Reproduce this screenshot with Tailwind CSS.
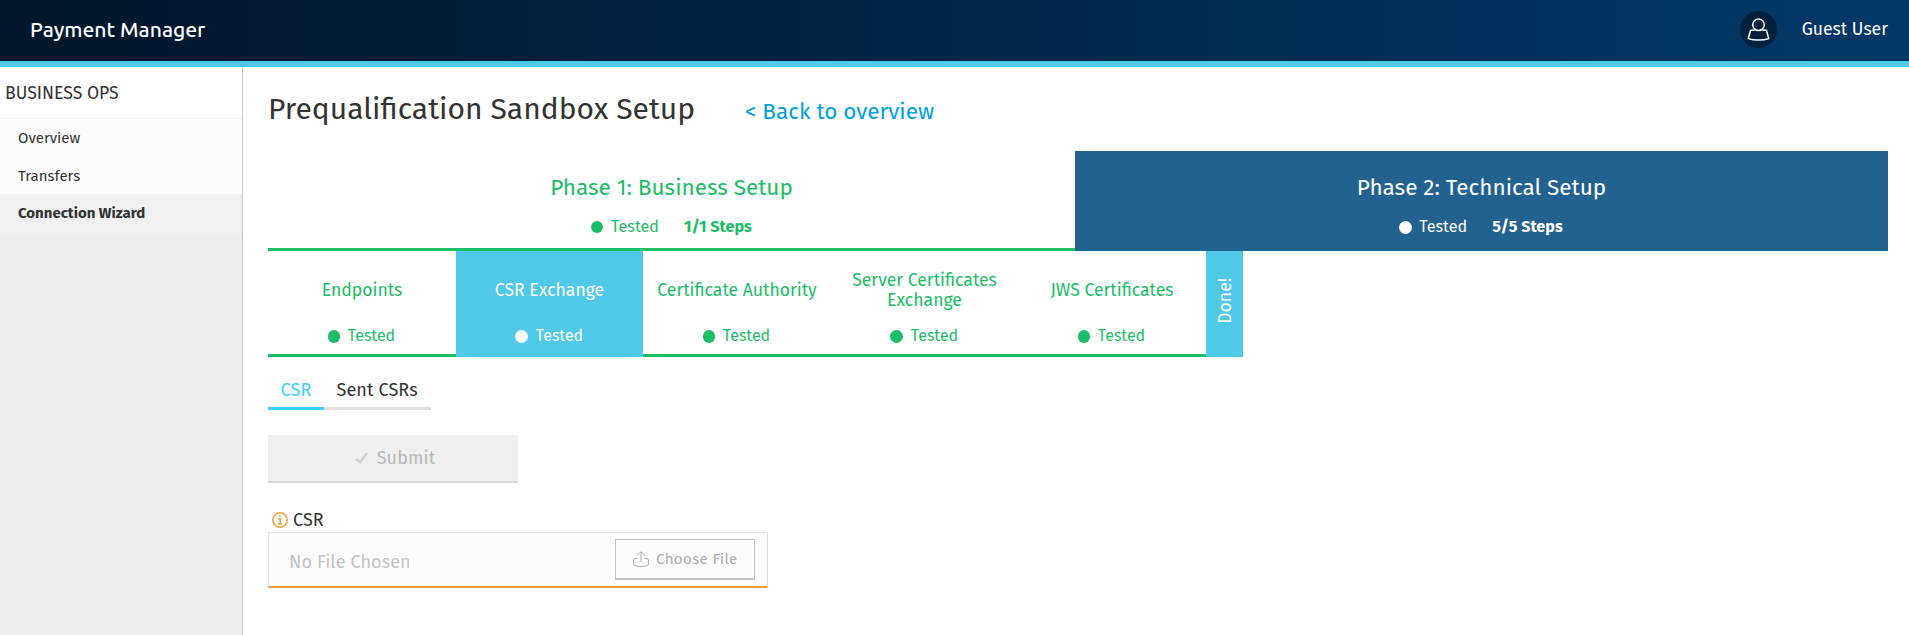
<!DOCTYPE html>
<html lang="en">
<head>
<meta charset="utf-8">
<title>Payment Manager</title>
<script src="https://cdn.jsdelivr.net/npm/@tailwindcss/browser@4"></script>
</head>
<body class="flex h-screen flex-col overflow-hidden bg-white font-['Fira_Sans','Noto_Sans',sans-serif] text-[#333]">
  <header class="flex h-[67px] shrink-0 items-center justify-between border-b-6 border-[#50c8e8] bg-linear-to-r from-[#00162b] to-[#033868] pr-[21px] pb-[3px] pl-[30px] text-white">
    <div class="font-['Ubuntu','Noto_Sans',sans-serif] text-[21.1px] leading-7 font-medium">Payment Manager</div>
    <div class="flex items-center">
      <div class="mt-px flex size-[37px] items-center justify-center rounded-full bg-[#03213c]">
        <svg class="size-[23px]" viewBox="0 0 23 23" fill="none" stroke="#fff" stroke-width="1.5" stroke-linejoin="round"><circle cx="11.5" cy="6.8" r="5.8"/><path d="M7.5 12.2H3.6L1.2 20.6C7 22.6 16 22.6 21.8 20.6L19.4 12.2H15.5"/></svg>
      </div>
      <div class="mt-0.5 ml-[25px] text-[17.6px] leading-6">Guest User</div>
    </div>
  </header>
  <div class="flex min-h-0 flex-1">
    <nav class="w-[243px] shrink-0 border-r border-[#c8c8c8] bg-[#ededed]">
      <div class="flex h-[52px] items-center border-b border-[#eee] bg-white pt-[3px] pl-[5px] text-[17.6px]">BUSINESS OPS</div>
      <div class="flex h-[38px] items-center bg-[#fcfcfc] pl-[18px] text-[15px]">Overview</div>
      <div class="flex h-[37px] items-center bg-[#fcfcfc] pt-0.5 pl-[18px] text-[15px]">Transfers</div>
      <div class="flex h-[39px] items-center bg-[#f0f0f0] pl-[18px] text-[15px] font-bold">Connection Wizard</div>
    </nav>
    <main class="flex-1 pt-[22px] pr-[21px] pl-[25px]">
      <div class="flex h-[62px] items-start">
        <h1 class="text-[30px] leading-10">Prequalification Sandbox Setup</h1>
        <a class="mt-[5px] ml-[50px] text-[22.5px] leading-9 text-[#009fe0]">&lt; Back to overview</a>
      </div>
      <div class="flex h-[100px] text-center">
        <div class="w-[807px] border-b-3 border-[#1bbd66] pt-[22px] text-[#1bbd66]">
          <div class="text-[22.5px] leading-[30px]">Phase 1: Business Setup</div>
          <div class="mt-[14px] flex items-center justify-center text-[16.2px] leading-5"><i class="mr-2 size-3 rounded-full bg-[#1bbd66]"></i>Tested<b class="ml-[25px]">1/1 Steps</b></div>
        </div>
        <div class="w-[813px] bg-[#226291] pt-[22px] text-white">
          <div class="text-[22.5px] leading-[30px]">Phase 2: Technical Setup</div>
          <div class="mt-[14px] flex items-center justify-center pr-px text-[16.2px] leading-5"><i class="mr-[7px] size-[13px] rounded-full bg-white"></i>Tested<b class="ml-[25px]">5/5 Steps</b></div>
        </div>
      </div>
      <div class="flex h-[106px] text-center text-[17.6px] leading-5 text-[#1bbd66]">
        <div class="w-[188px] border-b-3 border-[#1bbd66] pt-5">
          <div class="flex h-10 items-center justify-center">Endpoints</div>
          <div class="mt-[15px] flex items-center justify-center pr-px text-base leading-5"><i class="mr-2 h-[13px] w-3 rounded-full bg-[#1bbd66]"></i>Tested</div>
        </div>
        <div class="w-[187px] bg-[#50c8e8] pt-5 text-white">
          <div class="flex h-10 items-center justify-center">CSR Exchange</div>
          <div class="mt-[15px] flex items-center justify-center pr-px text-base leading-5"><i class="mr-2 size-[13px] rounded-full bg-white"></i>Tested</div>
        </div>
        <div class="w-[188px] border-b-3 border-[#1bbd66] pt-5">
          <div class="flex h-10 items-center justify-center">Certificate Authority</div>
          <div class="mt-[15px] flex items-center justify-center pr-px text-base leading-5"><i class="mr-2 h-[13px] w-3 rounded-full bg-[#1bbd66]"></i>Tested</div>
        </div>
        <div class="w-[187px] border-b-3 border-[#1bbd66] pt-5">
          <div class="flex h-10 items-center justify-center">Server Certificates<br>Exchange</div>
          <div class="mt-[15px] flex items-center justify-center pr-px text-base leading-5"><i class="mr-2 size-[13px] rounded-full bg-[#1bbd66]"></i>Tested</div>
        </div>
        <div class="w-[188px] border-b-3 border-[#1bbd66] pt-5">
          <div class="flex h-10 items-center justify-center">JWS Certificates</div>
          <div class="mt-[15px] flex items-center justify-center pr-px text-base leading-5"><i class="mr-2 h-[13px] w-3 rounded-full bg-[#1bbd66]"></i>Tested</div>
        </div>
        <div class="flex w-[37px] items-center justify-center bg-[#50c8e8] text-white">
          <span class="mt-[-7px] ml-0.5 rotate-180 [writing-mode:vertical-rl]">Done!</span>
        </div>
      </div>
      <div class="mt-[14px] flex h-[39px] text-[18px] leading-9 tracking-[0.1px]">
        <div class="w-14 border-b-3 border-[#3dcff9] pt-px pl-[12.5px] text-[#3dcff9]">CSR</div>
        <div class="w-[107px] border-b-3 border-[#e0e0e0] pt-px pl-[12.5px]">Sent CSRs</div>
      </div>
      <div class="mt-[25px] flex h-12 w-[250px] items-center justify-center border-b-2 border-[#d8d8d8] bg-[#efefef] pl-1 text-[18px] tracking-[0.1px] text-[#b8b8b8]">
        <svg class="mr-[9px] h-3 w-[13px]" viewBox="0 0 13 12" fill="none" stroke="#d2d2d2" stroke-width="2.4"><path d="M1 6.8L5 10.4L12 1"/></svg>Submit
      </div>
      <div class="mt-[25px] flex h-6 items-center pl-1 text-[18px]">
        <svg class="mr-[5px] size-4" viewBox="0 0 16 16" fill="none" stroke="#fa9a37"><circle cx="8" cy="8" r="7.2" stroke-width="1.4"/><path d="M6.2 6.7H8.2V11.6M5.9 11.8H10.3" stroke-width="1.4"/><circle cx="7.9" cy="4.3" r="1" fill="#fa9a37" stroke="none"/></svg>CSR
      </div>
      <div class="flex h-14 w-[500px] items-center justify-between border border-b-2 border-[#e0e0e0] border-b-[#f39a35] bg-[#fcfcfc] pr-3 pl-5">
        <span class="mt-1.5 text-[18px] tracking-[0.1px] text-[#c3c3c3]">No File Chosen</span>
        <span class="flex h-[41px] w-[140px] items-center border border-b-2 border-[#c3c3c3] pl-[17px] text-[15px] tracking-[0.4px] text-[#adadad]">
          <svg class="mr-[7px] size-4" viewBox="0 0 16 16" fill="none" stroke="#adadad" stroke-width="1"><path d="M8 11V1M3.8 4.6L8 .8L12.2 4.6M4.5 7.5H1.8L.6 9V14C3 15.8 13 15.8 15.4 14V9L14.2 7.5H11.5"/></svg>Choose File
        </span>
      </div>
    </main>
  </div>
</body>
</html>
